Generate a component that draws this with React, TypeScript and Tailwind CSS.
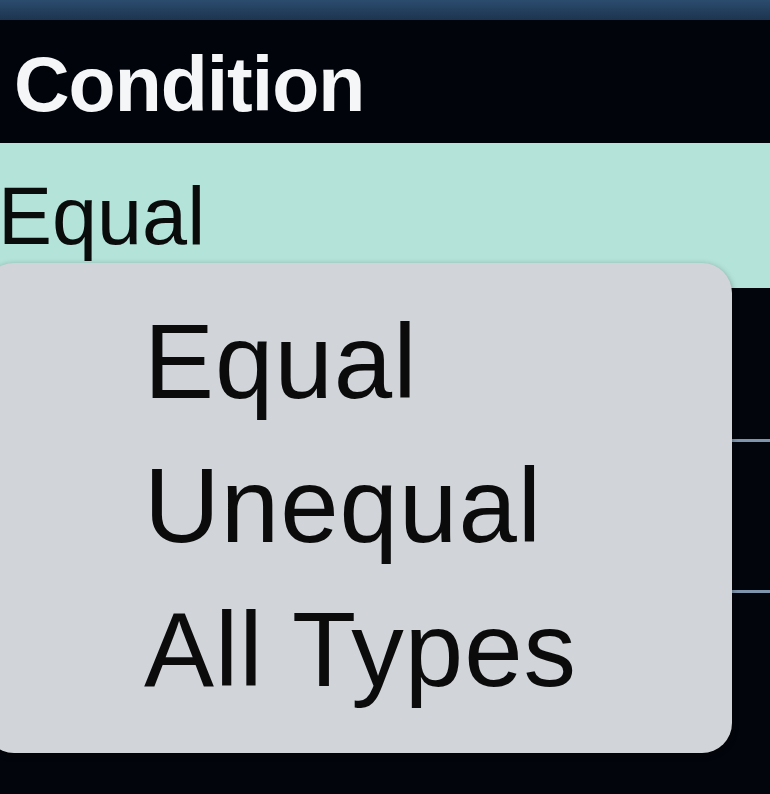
import React from "react";

export default function App() {
  const font = { fontFamily: '"Liberation Sans", Arial, Helvetica, sans-serif' };
  return (
    <div className="relative w-[770px] h-[794px] overflow-hidden bg-[#03050c]" style={font}>
      <div className="flex flex-col h-full">
        <div className="h-[20px] bg-gradient-to-b from-[#2c4c6e] to-[#1c344f]" />
        <div className="h-[123px] bg-[#02040b] pl-[14px] pt-[26px]">
          <div className="text-[77px] leading-none font-bold text-[#f4f6f8] tracking-[-1px]">Condition</div>
        </div>
        <div className="h-[145px] bg-[#b3e3d9] pt-[33px]">
          <div className="ml-[-2px] text-[81px] leading-none text-[#0a0c0c]">Equal</div>
        </div>
        <div className="h-[151px] bg-[#03050c]" />
        <div className="h-[3px] bg-[#7f95ad]" />
        <div className="h-[148px] bg-[#03050c]" />
        <div className="h-[3px] bg-[#7f95ad]" />
        <div className="flex-1 bg-[#03050c]" />
      </div>
      <div className="absolute left-[-16px] top-[263px] w-[748px] h-[490px] rounded-[30px] bg-[#d1d5d9] shadow-[0_2px_6px_rgba(0,0,0,0.35)] pl-[160px] pt-[27px]">
        <div className="text-[105px] leading-[144px] tracking-[1px] text-[#0b0b0c]">Equal</div>
        <div className="text-[105px] leading-[144px] tracking-[1px] text-[#0b0b0c]">Unequal</div>
        <div className="text-[105px] leading-[144px] tracking-[1px] text-[#0b0b0c]">All Types</div>
      </div>
    </div>
  );
}
